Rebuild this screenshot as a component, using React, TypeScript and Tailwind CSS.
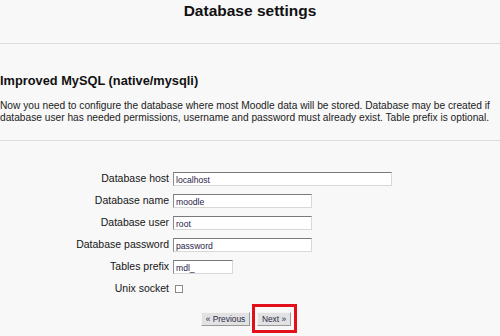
import React from "react";

const font = { fontFamily: '"Liberation Sans", Arial, sans-serif' };

function Field({ label, value, width }: { label: string; value: string; width: number }) {
  return (
    <div className="flex h-[22px] items-start">
      <div className="w-[169px] pt-[3px] text-right text-[10.5px] leading-[14px] text-[#151515]">{label}</div>
      <div className="ml-[4px] pt-[4px]">
        <div
          className="h-[14px] border border-t-[#7a7a7a] border-l-[#8a8a8a] border-r-[#d8d8d8] border-b-[#d8d8d8] bg-white pl-[2px] text-[8.6px] leading-[14px] text-[#2a1c48]"
          style={{ width }}
        >
          {value}
        </div>
      </div>
    </div>
  );
}

const btn =
  "block h-[14px] border border-t-[#f4f4f4] border-l-[#f4f4f4] border-r-[#9a9a9a] border-b-[#9a9a9a] bg-[#e2e2e2] text-[8.4px] leading-[12px] text-[#2a2a48]";

export default function App() {
  return (
    <div className="h-[336px] w-[500px] overflow-hidden bg-[#f8f8f8] text-[#151515]" style={font}>
      <div className="h-[44px] border-b border-[#dcdcdc] pt-[2px] text-center text-[15.5px] font-bold leading-[18px] text-[#111]">
        Database settings
      </div>
      <div className="border-b border-[#dcdcdc] pb-[16px]">
        <h2 className="mt-[29px] text-[12.8px] font-bold leading-[15px] text-[#111]">Improved MySQL (native/mysqli)</h2>
        <p className="mt-[12px] whitespace-nowrap text-[10.2px] leading-[12px] text-[#222]">
          Now you need to configure the database where most Moodle data will be stored. Database may be created if
          <br />
          database user has needed permissions, username and password must already exist. Table prefix is optional.
        </p>
      </div>
      <div className="mt-[27px] flex flex-col">
        <Field label="Database host" value="localhost" width={219} />
        <Field label="Database name" value="moodle" width={139} />
        <Field label="Database user" value="root" width={139} />
        <Field label="Database password" value="password" width={139} />
        <Field label="Tables prefix" value="mdl_" width={60} />
        <div className="flex h-[22px] items-start">
          <div className="w-[169px] pt-[3px] text-right text-[10.5px] leading-[14px] text-[#151515]">Unix socket</div>
          <div className="ml-[6px] mt-[7px] h-[8px] w-[8px] border border-[#8a8a8a] bg-white" />
        </div>
      </div>
      <div className="mt-[12px] flex items-start pl-[201px]">
        <button className={`${btn} w-[49px]`}>« Previous</button>
        <div className="relative ml-[7px] flex">
          <button className={`${btn} w-[34px]`}>Next »</button>
          <span className="pointer-events-none absolute left-[-5px] right-[-6px] top-[-8px] bottom-[-7px] border-[3px] border-[#e3101c]" />
        </div>
      </div>
    </div>
  );
}
